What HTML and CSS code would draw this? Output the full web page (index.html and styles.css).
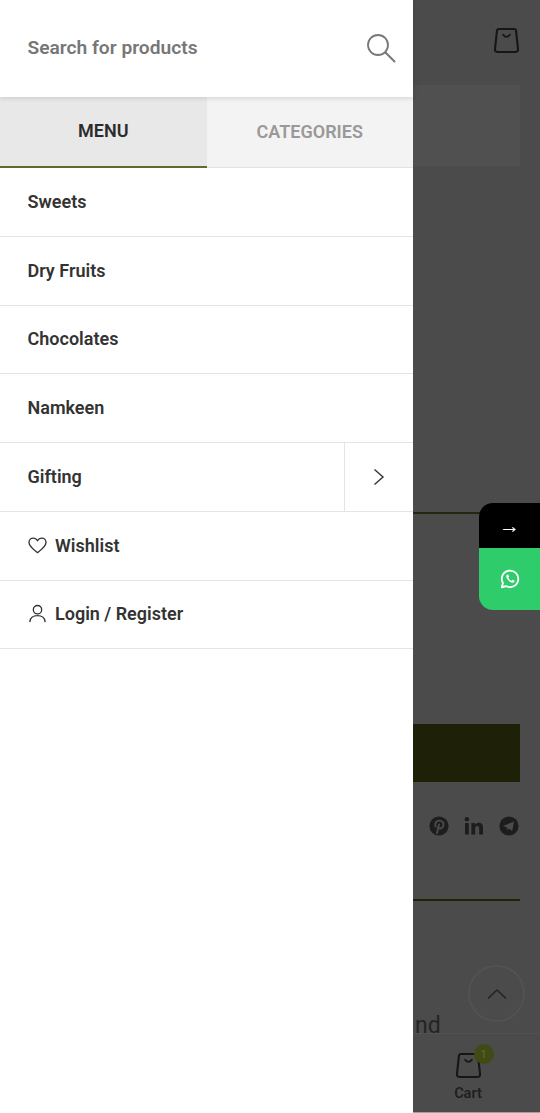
FILE: index.html
```html
<!DOCTYPE html>
<html lang="en">
<head>
<meta charset="utf-8">
<title>Menu</title>
<link rel="stylesheet" href="styles.css">
</head>
<body>
<div class="page">
  <aside class="drawer">
    <div class="search">
      <span class="search-text">Search for products</span>
      <svg class="search-icon" viewBox="0 0 30 30" width="30" height="30"><circle cx="12" cy="12" r="10" fill="none" stroke="#777" stroke-width="1.8"/><path d="M19.5 19.5 L28.5 28.5" stroke="#777" stroke-width="2" stroke-linecap="round"/></svg>
    </div>
    <div class="tabs">
      <div class="tab tab-active">MENU</div>
      <div class="tab">CATEGORIES</div>
    </div>
    <nav class="menu">
      <a class="row">Sweets</a>
      <a class="row">Dry Fruits</a>
      <a class="row">Chocolates</a>
      <a class="row">Namkeen</a>
      <a class="row row-sub">
        <span class="row-label">Gifting</span>
        <span class="arrow"><svg viewBox="0 0 12 18" width="12" height="18"><path d="M1.5 1.5 L10 9 L1.5 16.5" fill="none" stroke="#333" stroke-width="1.4"/></svg></span>
      </a>
      <a class="row row-icon">
        <svg viewBox="0 0 20 18" width="19" height="17"><path d="M10 16.6 C5 12.6 1 9.8 1 5.8 C1 3 3.1 1.2 5.4 1.2 C7.3 1.2 9 2.2 10 4 C11 2.2 12.7 1.2 14.6 1.2 C16.9 1.2 19 3 19 5.8 C19 9.8 15 12.6 10 16.6 Z" fill="none" stroke="#333" stroke-width="1.4" stroke-linejoin="round"/></svg>
        Wishlist
      </a>
      <a class="row row-icon">
        <svg viewBox="0 0 20 20" width="19" height="19"><circle cx="10" cy="6" r="4.4" fill="none" stroke="#333" stroke-width="1.4"/><path d="M2 18.5 C2.5 14 6 12.2 10 12.2 C14 12.2 17.5 14 18 18.5" fill="none" stroke="#333" stroke-width="1.4" stroke-linecap="round"/></svg>
        Login / Register
      </a>
    </nav>
  </aside>

  <main class="behind">
    <header class="behind-head">
      <svg class="bag" viewBox="0 0 26 28" width="25" height="27"><path d="M5 2 H21 Q22.6 2 22.9 3.6 L25 23 Q25.2 26 22 26 H4 Q0.8 26 1 23 L3.1 3.6 Q3.4 2 5 2 Z" fill="none" stroke="#161616" stroke-width="2.2" stroke-linejoin="round"/><path d="M9.5 8 Q13 12.5 16.5 8" fill="none" stroke="#161616" stroke-width="2" stroke-linecap="round"/></svg>
    </header>
    <div class="behind-box"></div>
    <div class="rule rule-one"></div>
    <div class="dark-bar"></div>
    <div class="social">
      <svg viewBox="0 0 20 20" width="20" height="20"><circle cx="10" cy="10" r="9.6" fill="#1d1d1d"/><path d="M8 17 L10 8.5 M6.6 10.6 C5.2 7.4 7.5 4.6 10.4 4.6 C13.2 4.6 14.8 6.6 14.4 9.2 C14 12 11.6 13.4 9.4 11.8" fill="none" stroke="#4b4b4b" stroke-width="1.9" stroke-linecap="round"/></svg>
      <svg viewBox="0 0 20 20" width="20" height="20"><rect x="1" y="7" width="3.8" height="11.5" fill="#1d1d1d"/><circle cx="2.9" cy="3.2" r="2.2" fill="#1d1d1d"/><path d="M7.4 7 H11 V8.8 C11.8 7.4 13.2 6.7 14.8 6.7 C18 6.7 19 8.8 19 12 V18.5 H15.2 V12.8 C15.2 11.2 14.8 10 13.3 10 C11.8 10 11.2 11.2 11.2 12.8 V18.5 H7.4 Z" fill="#1d1d1d"/></svg>
      <svg viewBox="0 0 20 20" width="20" height="20"><circle cx="10" cy="10" r="9.6" fill="#1d1d1d"/><path d="M4 10 L15 5.6 L13.2 15 L9.6 12.4 L8 14 L7.6 11.2 Z" fill="#4b4b4b"/></svg>
    </div>
    <div class="rule rule-two"></div>
    <div class="cut-text">nd</div>
  </main>

  <div class="float">
    <div class="float-arrow">→</div>
    <div class="float-chat">
      <svg viewBox="0 0 24 24" width="22" height="22"><path d="M3 21 L4.3 16.4 A9 9 0 1 1 7.7 19.7 Z" fill="none" stroke="#fff" stroke-width="2" stroke-linejoin="round"/><path d="M8.6 7.4 C7.6 8.4 7.6 10.2 9.4 12.6 C11.2 15 13.6 16.4 15.4 16 C16.4 15.8 17 15 17 14 L14.8 12.9 L13.8 14 C12.4 13.6 10.8 12 10.2 10.5 L11.1 9.5 L10 7.2 Z" fill="#fff"/></svg>
    </div>
  </div>

  <div class="to-top">
    <svg viewBox="0 0 20 12" width="20" height="12"><path d="M1 10.5 L10 2 L19 10.5" fill="none" stroke="#222" stroke-width="1.4"/></svg>
  </div>

  <div class="cart-bar">
    <div class="cart-icon">
      <svg viewBox="0 0 26 28" width="25" height="27"><path d="M5 2 H21 Q22.6 2 22.9 3.6 L25 23 Q25.2 26 22 26 H4 Q0.8 26 1 23 L3.1 3.6 Q3.4 2 5 2 Z" fill="none" stroke="#161616" stroke-width="2.2" stroke-linejoin="round"/><path d="M9.5 8 Q13 12.5 16.5 8" fill="none" stroke="#161616" stroke-width="2" stroke-linecap="round"/></svg>
      <span class="badge">1</span>
    </div>
    <span class="cart-label">Cart</span>
  </div>
</div>
</body>
</html>
```

FILE: styles.css
```css
* { box-sizing: border-box; }
html, body { margin: 0; padding: 0; }
body { font-family: Roboto, "Liberation Sans", sans-serif; background: #4b4b4b; }
.page { position: relative; display: flex; width: 540px; height: 1113px; overflow: hidden; background: #4b4b4b; }

.drawer { width: 413px; flex: none; height: 1113px; background: #fff; display: flex; flex-direction: column; }
.search { height: 97px; display: flex; align-items: center; justify-content: space-between; padding: 0 17px 2px 27.5px; position: relative; z-index: 1; background: #fff; box-shadow: 0 1px 5px rgba(0,0,0,.14); }
.search-text { font-size: 19.2px; font-weight: 600; color: #777; }
.tabs { display: flex; height: 71px; border-bottom: 1px solid #e2e2e2; }
.tab { flex: 1; display: flex; align-items: center; justify-content: center; font-size: 18px; font-weight: 600; color: #999; background: #f3f3f3; padding-bottom: 2px; }
.tab-active { color: #2c2c2c; background: #e8e8e8; border-bottom: 2px solid #5c6b2e; margin-bottom: -1px; }

.menu { display: flex; flex-direction: column; }
.row { height: 68.75px; display: flex; align-items: center; padding: 0 0 1px 27.5px; border-bottom: 1px solid #e4e4e4; font-size: 18px; font-weight: 600; color: #333; }
.row-sub { padding-right: 0; padding-bottom: 0; justify-content: space-between; }
.arrow { width: 69px; height: 100%; display: flex; align-items: center; justify-content: center; border-left: 1px solid #e4e4e4; }
.row-icon { gap: 8.5px; }
.row-icon svg { flex: none; }

.behind { flex: 1; display: flex; flex-direction: column; color: #222; }
.behind-head { height: 85px; display: flex; justify-content: flex-end; padding: 27px 21px 0 0; }
.behind-box { height: 81px; width: 107px; background: #505050; }
.rule { width: 107px; height: 2px; }
.rule-one { margin-top: 346px; background: #25280f; }
.dark-bar { margin-top: 210px; width: 107px; height: 58px; background: #1f2008; }
.social { display: flex; gap: 15px; width: 106px; justify-content: flex-end; padding-top: 34px; height: 88px; }
.rule-two { margin-top: 29px; background: #1f2308; }
.cut-text { margin-top: 112px; padding-left: 2px; font-size: 23px; line-height: 26px; color: #242424; }

.float { position: absolute; top: 503px; right: 0; width: 61px; height: 107px; border-radius: 14px 0 0 14px; overflow: hidden; display: flex; flex-direction: column; }
.float-arrow { height: 45px; background: #000; color: #fff; display: flex; align-items: center; justify-content: center; font-size: 21px; }
.float-chat { flex: 1; background: #2ecc6b; display: flex; align-items: center; justify-content: center; }

.to-top { position: absolute; left: 468px; top: 965px; width: 57px; height: 57px; border-radius: 50%; border: 2px solid #525252; display: flex; align-items: center; justify-content: center; }

.cart-bar { position: absolute; left: 413px; top: 1033px; width: 127px; height: 80px; background: #4b4b4b; border-top: 1px solid #525252; border-bottom: 1px solid #a0a0a0; display: flex; flex-direction: column; align-items: center; padding: 18px 17px 0 0; }
.cart-icon { position: relative; height: 27px; display: flex; }
.badge { position: absolute; left: 18px; top: -8px; width: 20px; height: 20px; border-radius: 50%; background: #3f4a14; color: #5f6b33; font-size: 11px; display: flex; align-items: center; justify-content: center; }
.cart-label { margin-top: 6px; font-size: 14.5px; font-weight: 600; color: #1e1e1e; }
```
